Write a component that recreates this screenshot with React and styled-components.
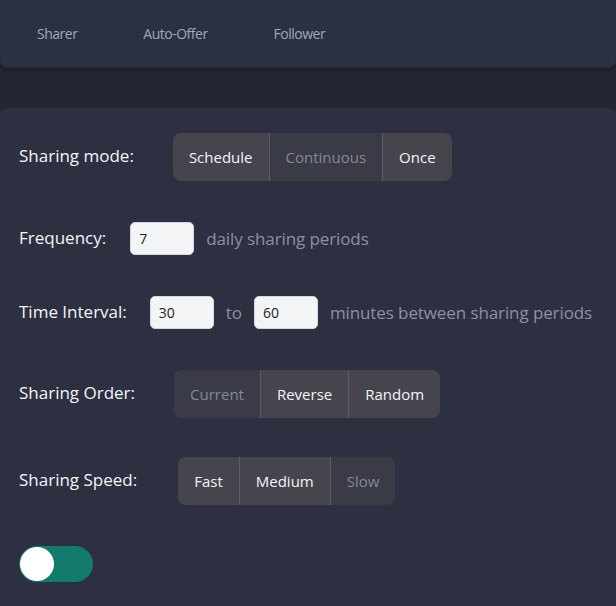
import React, { useState } from "react";
import styled, { createGlobalStyle } from "styled-components";

const GlobalStyle = createGlobalStyle`
  html, body {
    margin: 0;
    padding: 0;
    background: #232633;
  }
  body {
    font-family: "Open Sans", "Noto Sans", sans-serif;
  }
`;

const Page = styled.div`
  width: 616px;
  height: 606px;
  overflow: hidden;
  background: #232633;
`;

const Header = styled.nav`
  height: 68px;
  background: #2c3142;
  border-radius: 0 0 8px 8px;
  box-shadow: 0 2px 4px rgba(0, 0, 0, 0.25);
  display: flex;
  align-items: center;
  padding-left: 4px;
  padding-bottom: 2px;
  box-sizing: border-box;
`;

const Tab = styled.a`
  padding: 0 33px;
  font-size: 14px;
  letter-spacing: -0.5px;
  color: #a3a7b3;
  cursor: pointer;
`;

const Panel = styled.section`
  margin-top: 40px;
  background: #2c3041;
  border-radius: 8px 8px 0 0;
  min-height: 498px;
  padding: 25px 19px 0;
  box-sizing: border-box;
  display: flex;
  flex-direction: column;
  gap: 41px;
`;

const Row = styled.div`
  display: flex;
  align-items: center;
  white-space: nowrap;
  color: #f2f3f5;
  font-size: 17px;
  margin-top: ${(p) => p.$shift || 0}px;

  & > * {
    flex-shrink: 0;
  }
`;

const Label = styled.span`
  margin-right: ${(p) => p.$gap || 39}px;
  color: #f4f5f7;
  margin-top: -3px;
`;

const Muted = styled.span`
  color: #8d919d;
  margin: 0 12px;
  letter-spacing: -0.1px;
`;

const Input = styled.input`
  width: 64px;
  height: 33px;
  box-sizing: border-box;
  border: 1px solid #d5d8de;
  border-radius: 5px;
  background: #f3f4f6;
  color: #222;
  font-family: inherit;
  font-size: 14px;
  padding: 0 8px;
  outline: none;
`;

const Group = styled.div`
  display: flex;
  height: 48px;
  border-radius: 8px;
  overflow: hidden;
  background: #3a3b47;
`;

const Segment = styled.button`
  font-family: inherit;
  font-size: 15px;
  height: 100%;
  padding: 0 16px;
  border: 0;
  background: ${(p) => (p.$on ? "#46454e" : "#3a3b47")};
  color: ${(p) => (p.$on ? "#f4f4f6" : "#858996")};
  cursor: pointer;
  & + & {
    border-left: 1px solid #5d5e68;
  }
`;

const Switch = styled.button`
  width: 74px;
  height: 36px;
  border: 0;
  border-radius: 18px;
  background: ${(p) => (p.$on ? "#147a6c" : "#4a4d5a")};
  padding: 1px;
  display: flex;
  justify-content: ${(p) => (p.$on ? "flex-start" : "flex-end")};
  cursor: pointer;
`;

const Knob = styled.span`
  width: 34px;
  height: 34px;
  border-radius: 50%;
  background: #fff;
`;

const SegmentGroup = ({ options, active }) => (
  <Group>
    {options.map((o) => (
      <Segment key={o} $on={active.includes(o)}>
        {o}
      </Segment>
    ))}
  </Group>
);

export default function App() {
  const [on, setOn] = useState(true);
  return (
    <Page>
      <GlobalStyle />
      <Header>
        <Tab>Sharer</Tab>
        <Tab>Auto-Offer</Tab>
        <Tab>Follower</Tab>
      </Header>
      <Panel>
        <Row>
          <Label>Sharing mode:</Label>
          <SegmentGroup
            options={["Schedule", "Continuous", "Once"]}
            active={["Schedule", "Once"]}
          />
        </Row>
        <Row>
          <Label $gap={24}>Frequency:</Label>
          <Input defaultValue="7" />
          <Muted>daily sharing periods</Muted>
        </Row>
        <Row>
          <Label $gap={23}>Time Interval:</Label>
          <Input defaultValue="30" />
          <Muted>to</Muted>
          <Input defaultValue="60" />
          <Muted>minutes between sharing periods</Muted>
        </Row>
        <Row>
          <Label>Sharing Order:</Label>
          <SegmentGroup
            options={["Current", "Reverse", "Random"]}
            active={["Reverse", "Random"]}
          />
        </Row>
        <Row $shift={-2}>
          <Label $gap={41}>Sharing Speed:</Label>
          <SegmentGroup
            options={["Fast", "Medium", "Slow"]}
            active={["Fast", "Medium"]}
          />
        </Row>
        <Row>
          <Switch $on={on} onClick={() => setOn(!on)}>
            <Knob />
          </Switch>
        </Row>
      </Panel>
    </Page>
  );
}
